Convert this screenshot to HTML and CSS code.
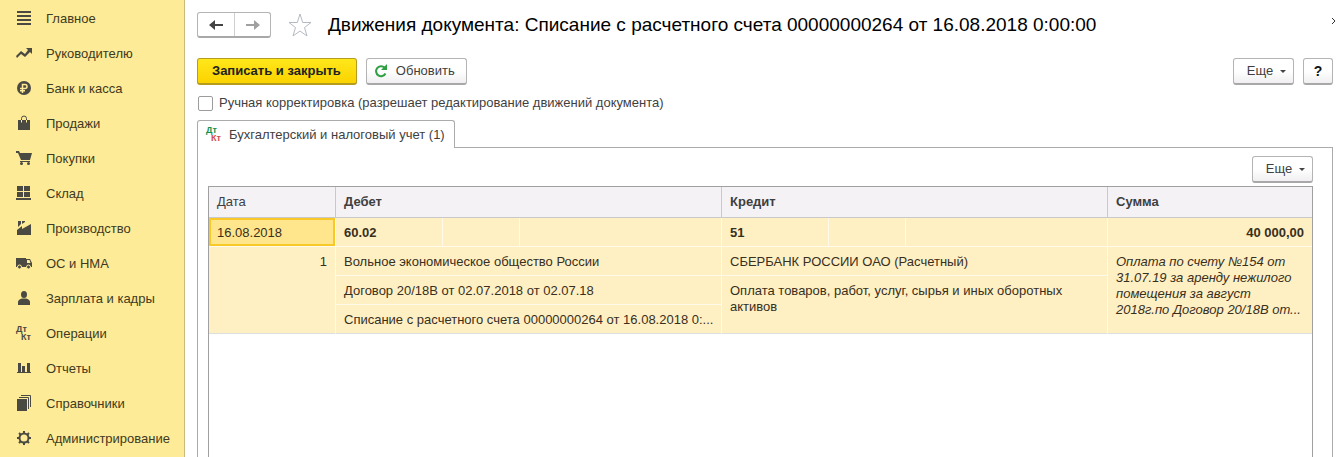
FILE: index.html
```html
<!DOCTYPE html>
<html lang="ru">
<head>
  <meta charset="UTF-8">
  <title>Движения документа</title>
  <link rel="stylesheet" href="styles.css">
</head>
<body>
  <nav class="sidebar">
    <a href="#"><svg viewBox="0 0 16 16"><path d="M1 1h14v2H1zM1 5h14v2H1zM1 9h14v2H1zM1 13h14v2H1z"/></svg>Главное</a>
    <a href="#"><svg viewBox="0 0 16 16"><path d="M10 3h6v6l-2-2-5 5-4-3-4 4-1-2 5-5 4 3 3-4z"/></svg>Руководителю</a>
    <a href="#"><svg viewBox="0 0 16 16"><circle cx="8" cy="8" r="7"/><path class="cut bold" d="M6.500 13V4.500h2.500a2 2 0 0 1 0 4H4M4 10.700H9"/></svg>Банк и касса</a>
    <a href="#"><svg viewBox="0 0 16 16"><path d="M2 5h12v10H2z"/><path class="thin" d="M5.500 5V3.500a2.500 2.500 0 0 1 5 0V5"/><path class="cut" d="M5.500 5v2.500M10.500 5v2.500"/></svg>Продажи</a>
    <a href="#"><svg viewBox="0 0 16 16"><path d="M0 1h3l1 2h12l-2 7H5L2 3H0zM4 11h10v1H4z"/><circle cx="5.500" cy="13.500" r="1.500"/><circle cx="12.500" cy="13.500" r="1.500"/></svg>Покупки</a>
    <a href="#"><svg viewBox="0 0 16 16"><path d="M1 1h6v5H1zM8 1h6v5H8zM1 7h6v5H1zM8 7h6v5H8zM0 13h15v2H0z"/></svg>Склад</a>
    <a href="#"><svg viewBox="0 0 16 16"><path d="M1 15V10l5-4v3l9-5v11zM2 1h3v3L2 7zM6 1h3v1L6 4z"/></svg>Производство</a>
    <a href="#"><svg viewBox="0 0 16 16"><path d="M0 3h10v9H0zM10 4h4l2 4v4h-6z"/><path class="hole" d="M11 5h2.500l1 3H11z"/><circle class="wheel" cx="3.500" cy="12" r="2"/><circle class="wheel" cx="12.500" cy="12" r="2"/></svg>ОС и НМА</a>
    <a href="#"><svg viewBox="0 0 16 16"><ellipse cx="8" cy="4.500" rx="3" ry="3.500"/><path d="M2 15v-3c0-2 2-3 4-3.500h4c2 .5 4 1.500 4 3.500v3z"/></svg>Зарплата и кадры</a>
    <a href="#"><svg class="dtkt" viewBox="0 0 16 16"><text x="0" y="7">Дт</text><text x="5" y="15">Кт</text></svg>Операции</a>
    <a href="#"><svg viewBox="0 0 16 16"><path d="M2 3h3v9H2zM6 6h3v6H6zM11 3h3v9h-3zM1 12h14v1H1z"/></svg>Отчеты</a>
    <a href="#"><svg viewBox="0 0 16 16"><path d="M1 4h10v12H1z"/><path class="thin" d="M3 2.500h9.500V14M5 .5h9.500V12"/></svg>Справочники</a>
    <a href="#"><svg viewBox="0 0 16 16"><circle class="line" cx="8" cy="8" r="4.500"/><path class="line" d="M8 1v2M8 13v2M1 8h2M13 8h2M3 3l1.500 1.500M11.500 11.500L13 13M13 3l-1.500 1.500M4.500 11.500L3 13"/></svg>Администрирование</a>
  </nav>

  <main class="content">
    <header class="title-bar">
      <div class="history">
        <button type="button" aria-label="Назад"><svg viewBox="0 0 14 10"><path d="M6 0v4h8v2H6v4L0 5z"/></svg></button>
        <button type="button" aria-label="Вперед" class="forward"><svg viewBox="0 0 14 10"><path d="M8 0v4H0v2h8v4l6-5z"/></svg></button>
      </div>
      <button type="button" class="star" aria-label="В избранное"><svg viewBox="0 0 24 24"><path d="M12 1l2.700 8.500H23l-6.500 5L19 23l-7-5-7 5 2.500-8.500-6.500-5h8.300z"/></svg></button>
      <h1>Движения документа: Списание с расчетного счета 00000000264 от 16.08.2018 0:00:00</h1>
      <button type="button" class="close" aria-label="Закрыть"><svg viewBox="0 0 4 8"><path d="M0 1l3 3-3 3"/></svg></button>
    </header>

    <div class="toolbar">
      <button type="button" class="btn primary">Записать и закрыть</button>
      <button type="button" class="btn refresh"><svg viewBox="0 0 14 14"><path class="arc" d="M10.500 3.500A5 5 0 1 0 11.500 9.500"/><path class="head" d="M13 0v6H7z"/></svg>Обновить</button>
      <button type="button" class="btn more">Еще</button>
      <button type="button" class="btn help">?</button>
    </div>

    <div class="manual">
      <input type="checkbox" id="manual">
      <label for="manual">Ручная корректировка (разрешает редактирование движений документа)</label>
    </div>

    <button type="button" class="tab"><svg class="dtkt" viewBox="0 0 16 16"><text class="dt" x="0" y="6">Дт</text><text class="kt" x="5" y="14">Кт</text></svg>Бухгалтерский и налоговый учет (1)</button>

    <section class="panel">
      <div class="panel-bar">
        <button type="button" class="btn more">Еще</button>
      </div>
      <div class="grid">
        <table>
          <colgroup>
            <col class="c-date">
            <col class="c-account"><col class="c-currency"><col>
            <col class="c-account"><col class="c-currency"><col>
            <col class="c-sum">
          </colgroup>
          <thead>
            <tr>
              <th class="plain">Дата</th>
              <th colspan="3">Дебет</th>
              <th colspan="3">Кредит</th>
              <th>Сумма</th>
            </tr>
          </thead>
          <tbody>
            <tr>
              <td class="selected">16.08.2018</td>
              <td class="strong">60.02</td><td></td><td></td>
              <td class="strong">51</td><td></td><td></td>
              <td class="strong num">40 000,00</td>
            </tr>
            <tr>
              <td rowspan="3" class="num">1</td>
              <td colspan="3">Вольное экономическое общество России</td>
              <td colspan="3">СБЕРБАНК РОССИИ ОАО (Расчетный)</td>
              <td rowspan="3" class="note"><p>Оплата по счету №154 от 31.07.19 за аренду нежилого помещения за август 2018г.по Договор 20/18В от...</p></td>
            </tr>
            <tr>
              <td colspan="3">Договор 20/18В от 02.07.2018 от 02.07.18</td>
              <td colspan="3" rowspan="2" class="wrap">Оплата товаров, работ, услуг, сырья и иных оборотных активов</td>
            </tr>
            <tr>
              <td colspan="3" class="long">Списание с расчетного счета 00000000264 от 16.08.2018 0:...</td>
            </tr>
          </tbody>
        </table>
      </div>
    </section>
  </main>
</body>
</html>
```
FILE: styles.css
```css
* {
  box-sizing: border-box;
}
body {
  margin: 0;
  display: flex;
  height: 100vh;
  overflow: hidden;
  background: #fff;
  color: #3f3f3f;
  font: 13px/16px "Liberation Sans", Arial, sans-serif;
}
button {
  font: inherit;
  color: inherit;
  cursor: pointer;
}

/* sections menu */
.sidebar {
  flex: 0 0 185px;
  padding-top: 1px;
  background: #feeb97;
  border-right: 1px solid #c8bb7d;
}
.sidebar a {
  display: flex;
  align-items: center;
  gap: 14px;
  height: 35px;
  padding-left: 16px;
  color: #403a22;
  text-decoration: none;
}
.sidebar svg {
  width: 16px;
  height: 16px;
  margin-bottom: 1px;
  fill: #4b4a42;
}
.sidebar .line {
  fill: none;
  stroke: #4b4a42;
  stroke-width: 2;
}
.sidebar .thin {
  fill: none;
  stroke: #4b4a42;
}
.sidebar .cut {
  fill: none;
  stroke: #feeb97;
}
.sidebar .bold {
  stroke-width: 1.5;
}
.sidebar .hole {
  fill: #feeb97;
}
.sidebar .wheel {
  stroke: #feeb97;
}
.dtkt {
  overflow: visible;
  font-size: 9px;
  font-weight: bold;
}

.content {
  flex: 1;
  min-width: 0;
  display: flex;
  flex-direction: column;
  padding: 12px 3px 0 12px;
}

.title-bar {
  display: flex;
  align-items: center;
  height: 26px;
}
.history {
  display: flex;
  height: 26px;
  border: 1px solid #b4b4b4;
  border-bottom: 2px solid #a8a8a8;
  border-radius: 3px;
}
.history button {
  width: 36px;
  padding: 0;
  border: 0;
  background: none;
}
.history .forward {
  border-left: 1px solid #cfcfcf;
}
.history svg {
  display: block;
  width: 14px;
  height: 10px;
  margin: 0 auto;
  fill: #444;
}
.history .forward svg {
  fill: #a0a0a0;
}
.star {
  margin-left: 17px;
  padding: 0;
  border: 0;
  background: none;
}
.star svg {
  display: block;
  width: 24px;
  height: 24px;
  fill: none;
  stroke: #b5bac2;
}
h1 {
  flex: 1;
  margin: 0 0 0 16px;
  color: #000;
  font-size: 19px;
  font-weight: normal;
  line-height: 28px;
  white-space: nowrap;
}
.close {
  align-self: flex-start;
  margin: 5px -3px 0 0;
  padding: 0;
  border: 0;
  background: none;
}
.close svg {
  display: block;
  width: 4px;
  height: 8px;
  fill: none;
  stroke: #333;
}

.toolbar {
  display: flex;
  gap: 9px;
  margin-top: 20px;
}
.btn {
  height: 27px;
  padding: 0 12px;
  background: linear-gradient(#fff 50%, #f1eff1);
  border: 1px solid #b4b4b4;
  border-bottom: 2px solid #a8a8a8;
  border-radius: 3px;
}
.primary {
  padding: 0 15px 0 14px;
  color: #222;
  font-weight: bold;
  background: linear-gradient(#ffe71a, #fbd300);
  border-color: #b59c1c;
}
.refresh {
  display: flex;
  align-items: center;
  gap: 8px;
  padding: 0 11px 0 7px;
}
.refresh svg {
  width: 14px;
  height: 14px;
}
.refresh .arc {
  fill: none;
  stroke: #2fa044;
  stroke-width: 2;
}
.refresh .head {
  fill: #2fa044;
}
.more {
  width: 61px;
  margin-left: auto;
  padding: 0 6px 0 12px;
}
.more::after {
  content: "";
  display: inline-block;
  margin-left: 7px;
  vertical-align: 2px;
  border: 3px solid transparent;
  border-top-color: #444;
  border-bottom: 0;
}
.help {
  width: 30px;
  padding: 0;
  color: #111;
  font-size: 14px;
  font-weight: bold;
}

.manual {
  display: flex;
  align-items: center;
  gap: 6px;
  margin-top: 10px;
  padding-left: 1px;
}
.manual input {
  appearance: none;
  width: 15px;
  height: 15px;
  margin: 0;
  border: 1px solid #9c9c9c;
  border-radius: 2px;
}

.tab {
  position: relative;
  z-index: 1;
  align-self: flex-start;
  display: flex;
  align-items: center;
  gap: 7px;
  height: 28px;
  margin: 9px 0 -1px;
  padding: 0 9px 0 8px;
  background: #fff;
  border: 1px solid #ababab;
  border-bottom: 0;
  border-radius: 3px 3px 0 0;
}
.tab svg {
  width: 16px;
  height: 16px;
}
.dt {
  fill: #15914d;
}
.kt {
  fill: #cf4d50;
}

.panel {
  flex: 1;
  display: flex;
  flex-direction: column;
  padding: 8px 19px 0 10px;
  border: 1px solid #ababab;
  border-bottom: 0;
}
.panel-bar {
  display: flex;
}

.grid {
  flex: 1;
  margin-top: 3px;
  border: 1px solid #a0a0a0;
  border-bottom: 0;
}
table {
  width: 100%;
  table-layout: fixed;
  border-collapse: separate;
  border-spacing: 0;
}
.c-date {
  width: 127px;
}
.c-account {
  width: 107px;
}
.c-currency {
  width: 77px;
}
.c-sum {
  width: 204px;
}
th {
  height: 31px;
  padding: 0 8px;
  background: #f5f2f6;
  border-right: 1px solid #c9c9c9;
  border-bottom: 1px solid #c9c9c9;
  text-align: left;
}
.plain {
  font-weight: normal;
}
td {
  height: 29px;
  padding: 1px 8px 0;
  background: #fff0c4;
  border-right: 1px solid #fffaea;
  border-bottom: 1px solid #fffaea;
  color: #382f1c;
  white-space: nowrap;
}
th:last-child,
.strong.num,
.note {
  border-right: 0;
}
.selected {
  background: #ffe68c;
  box-shadow: inset 0 0 0 2px #f9c927;
}
.strong {
  font-weight: bold;
}
.num {
  text-align: right;
}
td[rowspan] {
  padding-top: 7px;
  border-bottom-color: #dedede;
  vertical-align: top;
}
.long {
  border-bottom-color: #dedede;
}
.wrap {
  white-space: normal;
}
.note p {
  margin: 0;
  font-style: italic;
  white-space: normal;
}
```
